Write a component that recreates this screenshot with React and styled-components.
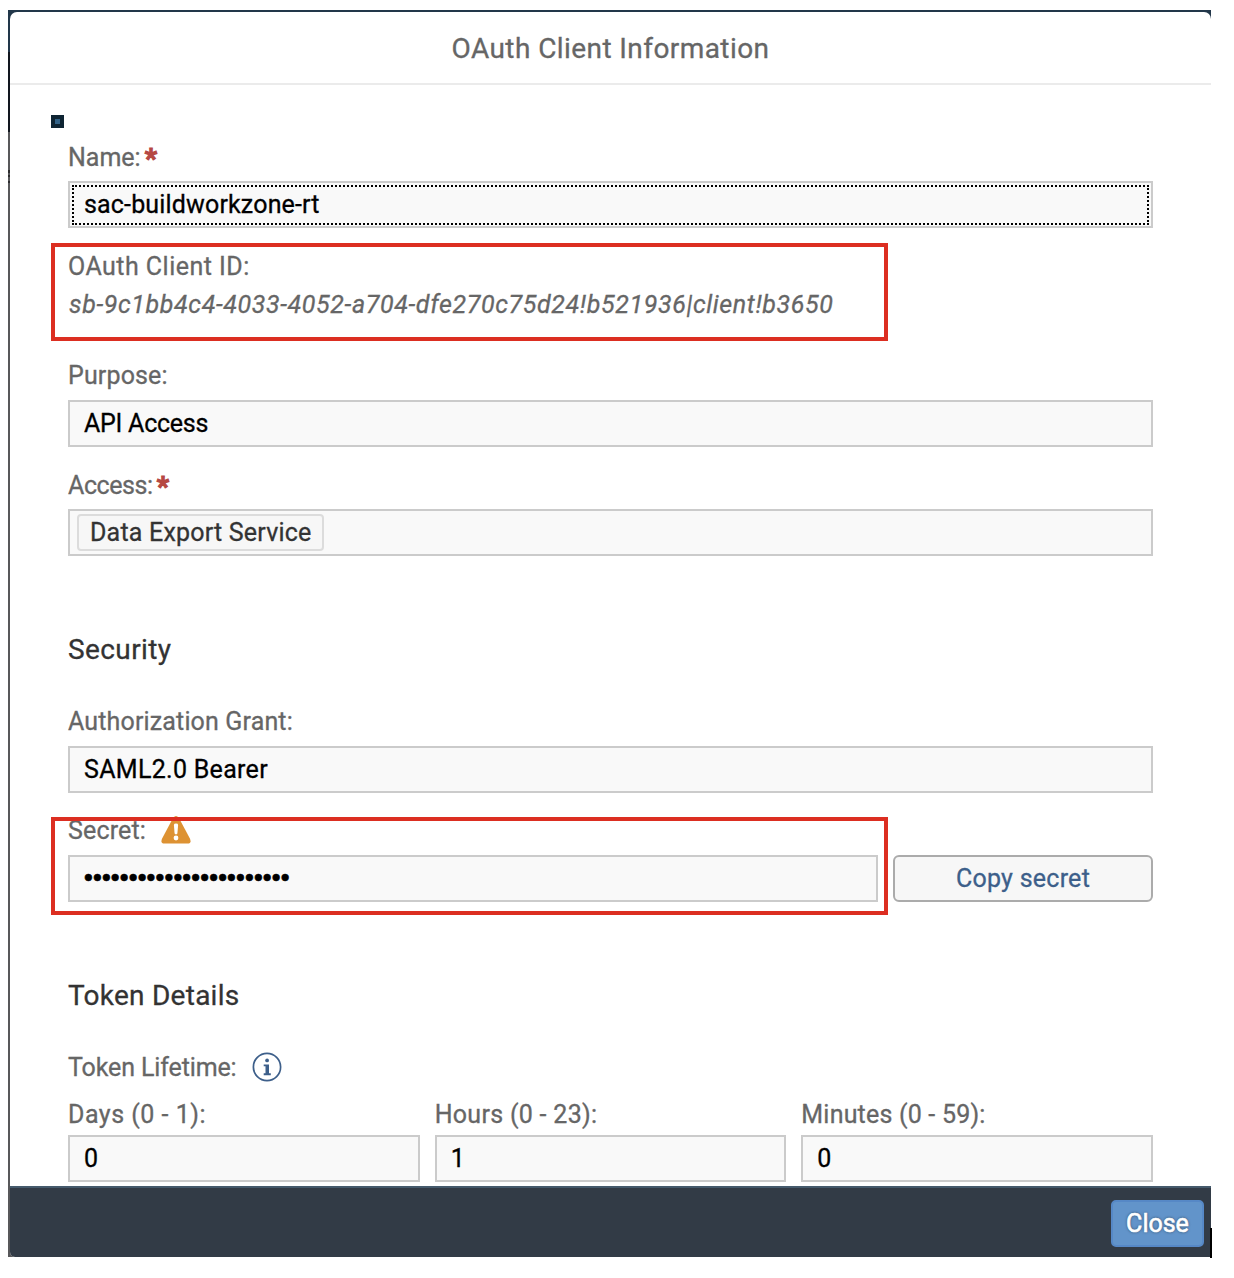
import React from "react";
import styled, { createGlobalStyle } from "styled-components";

const Global = createGlobalStyle`
  * { box-sizing: border-box; }
  html, body { margin: 0; padding: 0; background: #fff; }
  body {
    font-family: Roboto, "Liberation Sans", sans-serif;
    font-size: 25px;
    -webkit-text-stroke: 0.3px currentColor;
    overflow: hidden;
  }
`;

const Screen = styled.div`
  position: relative;
  width: 1234px;
  height: 1278px;
  padding: 10px 23px 21px 8px;
  background: #fff;
  overflow: hidden;
`;

const Backdrop = styled.div`
  height: 1247px;
  padding: 2px 0 0 2px;
  background: linear-gradient(
    #22374a 0 42px,
    #12171f 42px 122px,
    #58585a 122px 160px,
    #2c2c2e 160px 163px,
    #58585a 163px 165px,
    #2c2c2e 165px 167px,
    #58585a 167px 171px,
    #2c2c2e 171px 173px,
    #58585a 173px
  );
`;

const Dialog = styled.section`
  display: flex;
  flex-direction: column;
  height: 1245px;
  background: #fff;
  border-radius: 7px 7px 0 5px;
  overflow: hidden;
`;

const Header = styled.header`
  flex: none;
  height: 73px;
  border-bottom: 2px solid #ebebeb;
  text-align: center;
  font-size: 28px;
  line-height: 74px;
  color: #666;
  letter-spacing: 0.42px;
`;

const Body = styled.main`
  flex: 1;
  min-height: 0;
  padding: 57px 58px 0;
  overflow: hidden;
`;

const Label = styled.div`
  display: flex;
  align-items: center;
  height: 30px;
  margin-bottom: ${(p) => p.$gap ?? 9}px;
  white-space: pre;
  color: #666;
  letter-spacing: ${(p) => p.$ls || 0}px;
`;

const Required = styled.span`
  margin-left: 4px;
  padding-top: 3px;
  font-weight: 700;
  font-size: 27px;
  line-height: 30px;
  color: #b54843;
  letter-spacing: 0;
  -webkit-text-stroke: 1.2px #b54843;
`;

const Field = styled.div`
  display: flex;
  align-items: center;
  flex: 1;
  height: 47px;
  padding: 0 14px;
  border: 2px solid #cbcbcb;
  background: #f9f9f9;
  color: #000;
  white-space: pre;
  letter-spacing: ${(p) => p.$ls || 0}px;
`;

const FocusedField = styled(Field)`
  padding: 0 2px;
`;

const FocusRing = styled.div`
  display: flex;
  align-items: center;
  flex: 1;
  height: 40px;
  margin-top: 1px;
  padding: 0 0 1px 10px;
  border: 2px dotted #000;
`;

const TokenField = styled(Field)`
  padding: 0 7px;
`;

const Token = styled.span`
  display: flex;
  align-items: center;
  width: 247px;
  height: 37px;
  padding-left: 11px;
  border: 2px solid #dcdcdc;
  border-radius: 4px;
  background: #f7f7f7;
  color: #333;
`;

const Group = styled.div`
  margin-bottom: ${(p) => p.$after ?? 24}px;
`;

const ClientId = styled.div`
  height: 30px;
  line-height: 32px;
  padding-left: 1px;
  font-style: italic;
  color: #666;
  white-space: nowrap;
  letter-spacing: 0.63px;
`;

const SectionTitle = styled.h2`
  height: 34px;
  margin: 0 0 40px;
  font-size: 28px;
  font-weight: 400;
  line-height: 35px;
  color: #333;
  letter-spacing: ${(p) => p.$ls || 0}px;
`;

const SecretRow = styled.div`
  display: flex;
  gap: 15px;
`;

const Mask = styled.span`
  padding-bottom: 2px;
  font-family: "Liberation Sans", sans-serif;
  font-size: 25px;
  -webkit-text-stroke: 0.6px #000;
`;

const CopyButton = styled.button`
  width: 260px;
  height: 47px;
  padding: 0;
  border: 2px solid #ababab;
  border-radius: 6px;
  background: #f7f7f7;
  font: inherit;
  color: #3d5f8a;
  letter-spacing: 0.25px;
`;

const Lifetime = styled.div`
  display: grid;
  grid-template-columns: repeat(3, 1fr);
  gap: 15px;
`;

const Icon = styled.svg`
  flex: none;
  margin-left: ${(p) => p.$left}px;
`;

const Footer = styled.footer`
  flex: none;
  display: flex;
  justify-content: flex-end;
  height: 71px;
  padding: 12px 7px 0;
  border-top: 2px solid #455a6c;
  background: #323b46;
`;

const CloseButton = styled.button`
  width: 93px;
  height: 47px;
  padding: 0 0 1px;
  border: 2px solid #5688c6;
  border-radius: 5px;
  background: #6294ca;
  font: inherit;
  color: #fff;
  text-shadow: 0 0 3px rgba(0, 0, 0, 0.6);
  -webkit-text-stroke: 0.6px #fff;
`;

const Highlight = styled.div`
  position: absolute;
  top: ${(p) => p.$top}px;
  left: 51px;
  width: 837px;
  height: 98px;
  border: 4px solid #dc2e21;
`;

const Handle = styled.div`
  position: absolute;
  top: 115px;
  left: 51px;
  width: 13px;
  height: 13px;
  border: 4px solid #0e2433;
  background: #316186;
`;

const Caret = styled.div`
  position: absolute;
  top: 1228px;
  left: 1210px;
  width: 2px;
  height: 30px;
  background: #000;
`;

const WarningIcon = () => (
  <Icon $left={15} width="30" height="28" viewBox="0 0 30 28">
    <path d="M12.3 1.6Q15-1.6 17.7 1.6L29 22.8Q30.8 27.4 26.6 27.6H3.4Q-.8 27.4 1 22.8Z" fill="#dd9233" />
    <path d="M12.9 9Q12.9 7.6 15 7.6T17.1 9L16.4 17.6Q16.2 18.4 15 18.4T13.6 17.6Z" fill="#fff" />
    <circle cx="15" cy="22" r="2.4" fill="#fff" />
  </Icon>
);

const InfoIcon = () => (
  <Icon $left={15} width="30" height="30" viewBox="0 0 30 30">
    <circle cx="15" cy="15" r="13.6" fill="none" stroke="#3d5f8a" strokeWidth="1.7" />
    <circle cx="15.1" cy="8.4" r="1.9" fill="#3d5f8a" />
    <path d="M11.7 12.4H17V21.3H18.8V23.2H11.7V21.3H13.5V14.3H11.7Z" fill="#3d5f8a" />
  </Icon>
);

export default function App() {
  return (
    <Screen>
      <Global />
      <Backdrop>
        <Dialog>
          <Header>OAuth Client Information</Header>
          <Body>
            <Group $after={23}>
              <Label>Name:<Required>*</Required></Label>
              <FocusedField $ls={0.16}>
                <FocusRing>sac-buildworkzone-rt</FocusRing>
              </FocusedField>
            </Group>
            <Group $after={41}>
              <Label $gap={8} $ls={0.47}>OAuth Client ID:</Label>
              <ClientId>sb-9c1bb4c4-4033-4052-a704-dfe270c75d24!b521936|client!b3650</ClientId>
            </Group>
            <Group $after={23}>
              <Label $gap={10} $ls={0.15}>Purpose:</Label>
              <Field $ls={-0.25}>API Access</Field>
            </Group>
            <Group $after={76}>
              <Label $ls={-0.42}>Access:<Required>*</Required></Label>
              <TokenField $ls={0.2}><Token>Data Export Service</Token></TokenField>
            </Group>
            <SectionTitle $ls={0.4}>Security</SectionTitle>
            <Group $after={22}>
              <Label $gap={10} $ls={0.15}>Authorization Grant:</Label>
              <Field $ls={0.3}>SAML2.0 Bearer</Field>
            </Group>
            <Group $after={76}>
              <Label $gap={10} $ls={0.15}>Secret:<WarningIcon /></Label>
              <SecretRow>
                <Field $ls={0.19}><Mask>{"•".repeat(23)}</Mask></Field>
                <CopyButton>Copy secret</CopyButton>
              </SecretRow>
            </Group>
            <SectionTitle $ls={0.25}>Token Details</SectionTitle>
            <Label $gap={17} $ls={-0.12}>Token Lifetime:<InfoIcon /></Label>
            <Lifetime>
              <div><Label $gap={6} $ls={0.5}>Days (0 - 1):</Label><Field>0</Field></div>
              <div><Label $gap={6} $ls={0.3}>Hours (0 - 23):</Label><Field>1</Field></div>
              <div><Label $gap={6} $ls={0.2}>Minutes (0 - 59):</Label><Field>0</Field></div>
            </Lifetime>
          </Body>
          <Footer><CloseButton>Close</CloseButton></Footer>
        </Dialog>
      </Backdrop>
      <Handle />
      <Highlight $top={243} />
      <Highlight $top={817} />
      <Caret />
    </Screen>
  );
}
